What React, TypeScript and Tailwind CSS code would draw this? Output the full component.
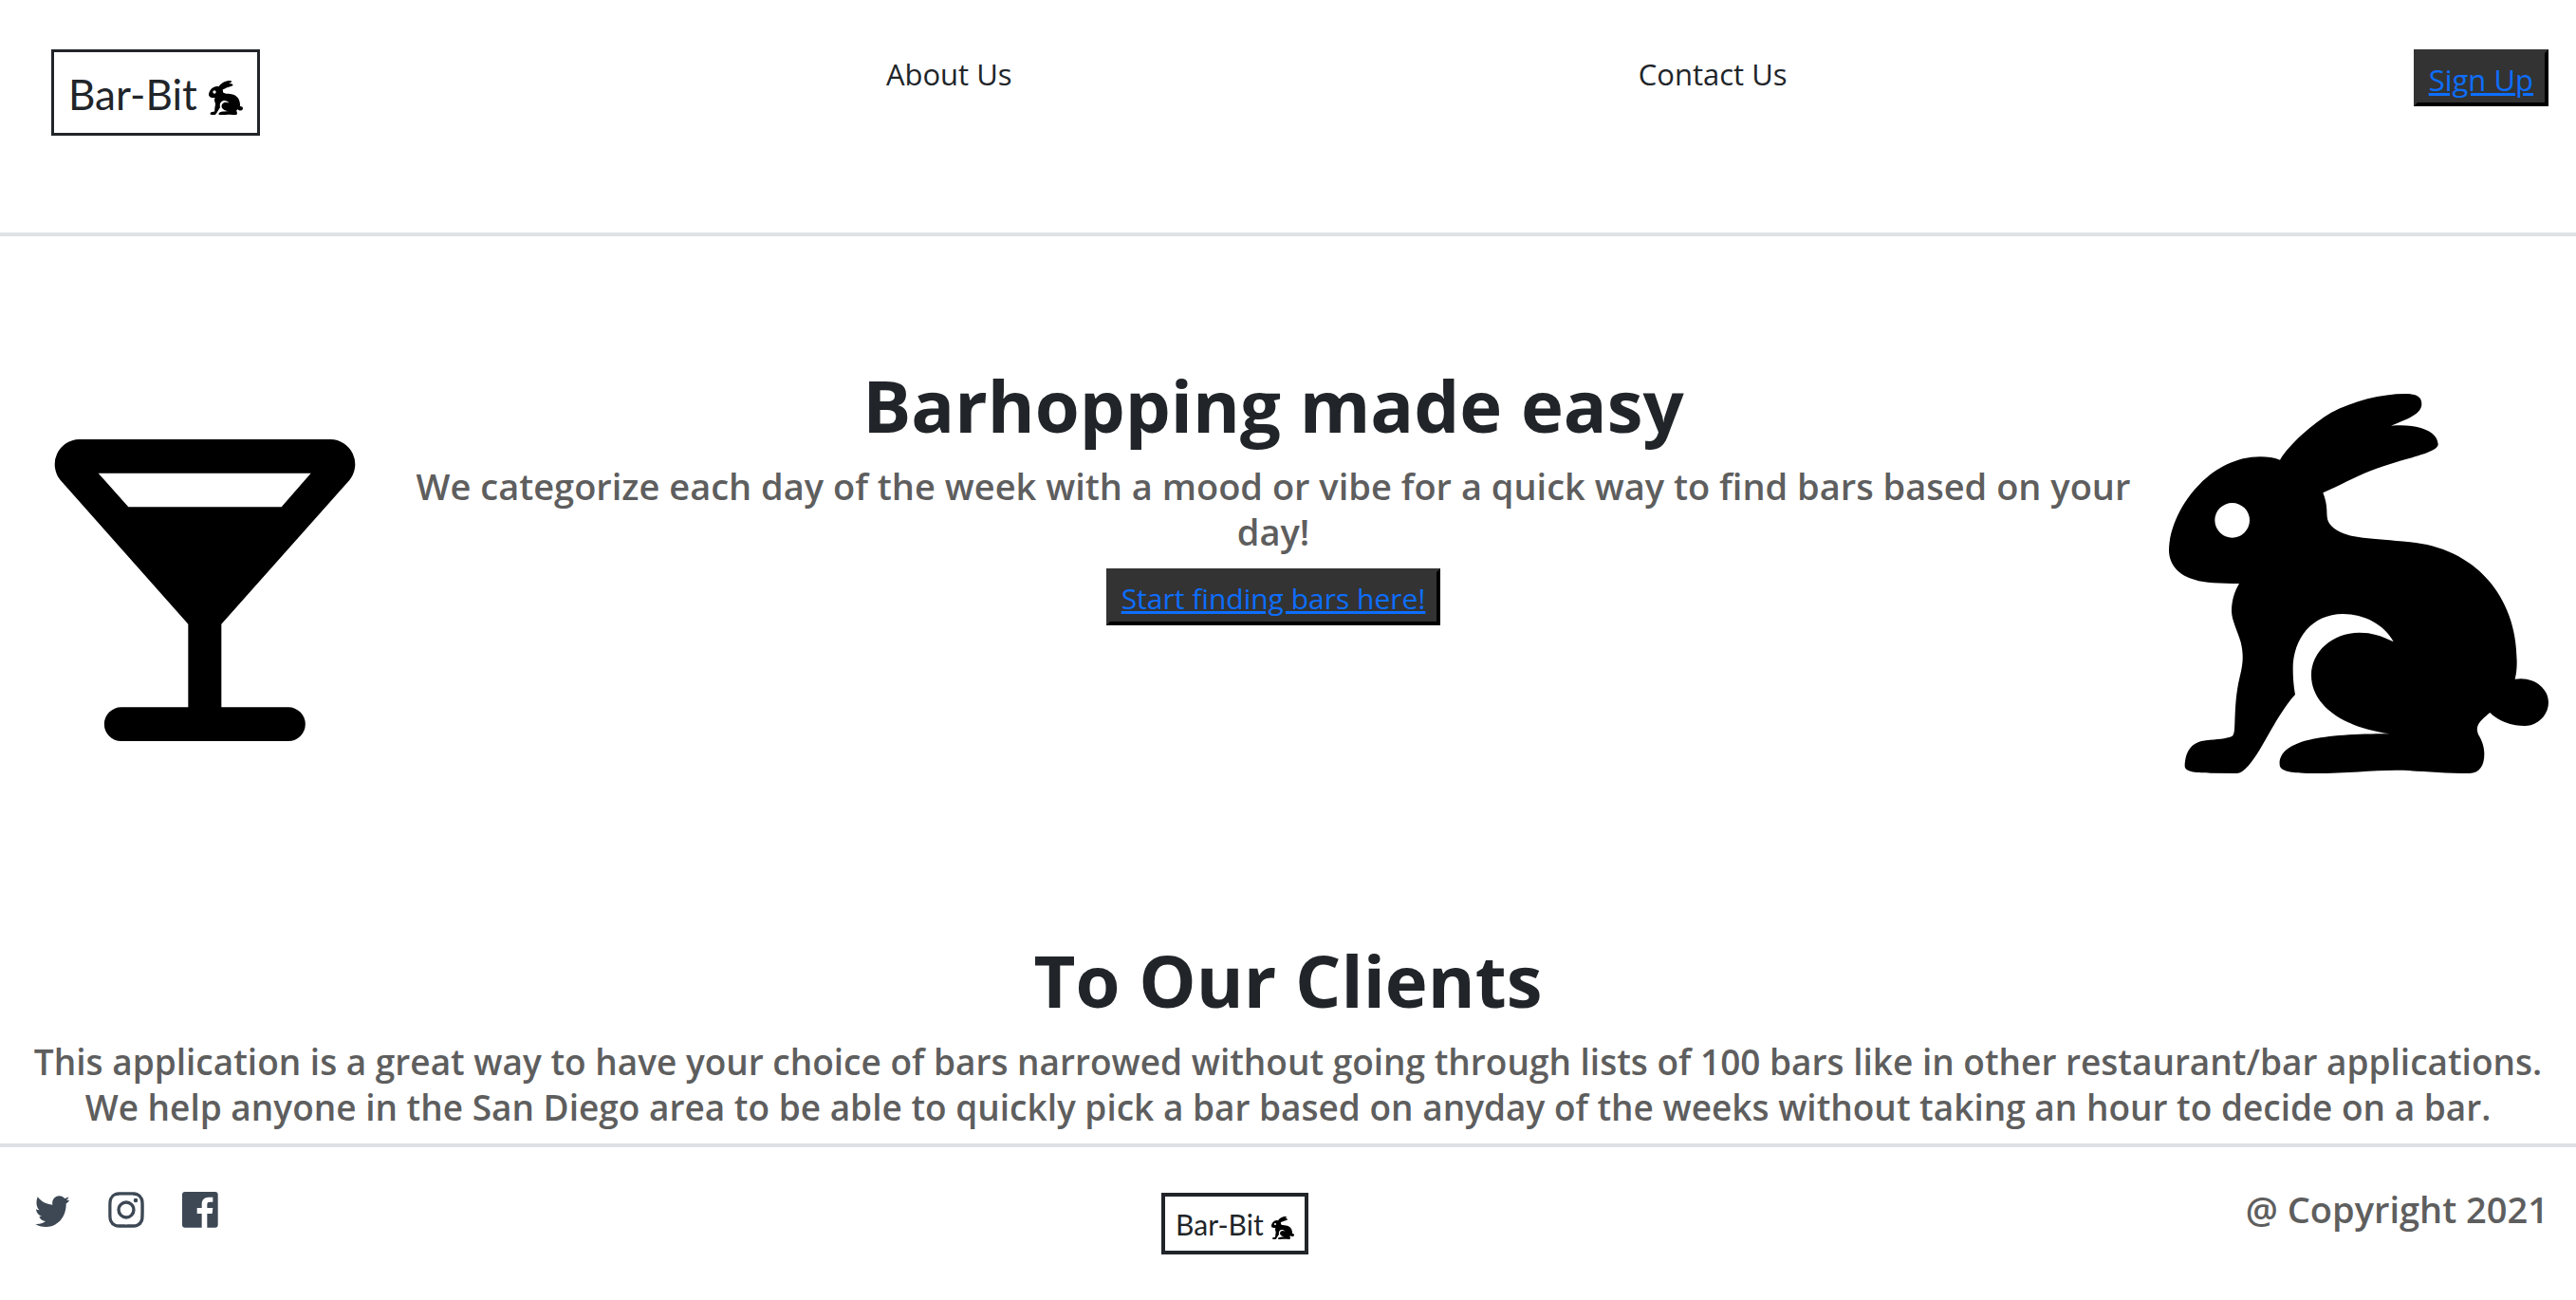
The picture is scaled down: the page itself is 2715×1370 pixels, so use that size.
import { BiLogoInstagram } from "react-icons/bi";

function Rabbit({ className }: { className: string }) {
  return (
    <svg viewBox="78 75 1200 1200" className={className} fill="#000" aria-hidden="true">
      <path
        fillRule="evenodd"
        d="M429 284C460 232 535 168 590 135C660 98 750 75 825 75C862 75 877 85 877 107C877 140 830 155 780 176C870 168 928 195 929 235C929 258 850 275 780 296C690 322 650 350 565 388C590 450 562 470 600 500C645 535 720 530 840 544C1040 562 1178 710 1178 920C1178 945 1176 960 1172 977C1230 967 1278 1005 1278 1050C1278 1092 1243 1125 1203 1125C1160 1125 1120 1110 1093 1083C1060 1110 1045 1125 1056 1152C1070 1175 1075 1195 1075 1215C1075 1250 1060 1275 1028 1275C940 1275 850 1265 795 1265C720 1265 640 1275 540 1275C470 1275 429 1270 428 1248C425 1170 560 1150 775 1150C620 1128 528 1055 528 965C528 890 595 830 680 830C720 830 750 840 788 859C760 805 695 771 628 771C530 771 470 850 470 945C470 970 472 1000 477 1026C440 1065 400 1140 365 1200C340 1240 315 1275 292 1275L210 1274C170 1273 128 1273 128 1252C130 1210 145 1176 195 1171C230 1168 260 1165 275 1159C285 1155 285 1140 286 1115C288 1060 290 1020 302 970C312 930 315 900 305 860C295 825 276 790 276 762C276 730 285 700 300 675C240 674 190 674 160 663C110 650 78 615 78 570C78 450 200 274 367 274C390 274 410 277 429 284ZM333 475A55 55 0 1 0 223 475A55 55 0 1 0 333 475Z"
      />
    </svg>
  );
}

function Martini({ className }: { className: string }) {
  return (
    <svg viewBox="111 99 954 954" className={className} fill="#000" aria-hidden="true">
      <path
        fillRule="evenodd"
        d="M190 99H985A79 79 0 0 1 1045 228L640 683V946H852A53.500 53.500 0 0 1 852 1053H323A53.500 53.500 0 0 1 323 946H535V683L131 228A79 79 0 0 1 190 99ZM251 206L346 313H830L923 206Z"
      />
    </svg>
  );
}

function Twitter() {
  return (
    <svg viewBox="0 0 150 150" className="size-[50px]" fill="currentColor" aria-hidden="true">
      <path d="M29 34C40 49 57 58 76 59C73 42 85 31 97 31C105 31 110 34 114 39C119 38 123 37 127 34C126 39 124 42 120 45L129 44C127 49 124 52 119 55C120 98 92 128 57 129C42 129 30 126 22 120C34 121 46 118 54 111C44 110 37 105 34 96H43C32 93 25 84 24 73C28 75 31 76 35 76C24 67 23 49 29 34Z" />
    </svg>
  );
}

function Facebook() {
  return (
    <svg viewBox="-18 -18 150 150" className="size-[50px]" fill="currentColor" aria-hidden="true">
      <path d="M9 0H104Q113 0 113 9V104Q113 113 104 113H79V69H95L97 51H79V40C79 34 82 32 87 32H97V17H83C70 17 62 26 62 39V51H47V69H62V113H9Q0 113 0 104V9Q0 0 9 0Z" />
    </svg>
  );
}

const heading = "text-[76px] leading-[96px] font-bold text-[#212529]";
const button =
  "border-4 border-t-[#333] border-l-[#333] border-r-black border-b-black bg-[#333] px-3 pt-1 leading-[48px] text-[#0d6efd] underline";

export default function App() {
  return (
    <div className="min-h-screen bg-white font-['Open_Sans',sans-serif] text-[31px] leading-[48px] text-[#212529]">
      <header className="flex h-[249px] items-start justify-between border-b-4 border-[#dee2e6] pt-[52px] pr-[29px] pl-[54px]">
        <a href="#home" className="flex items-center gap-3 border-[3px] border-[#212529] px-[15px] pt-5 pb-[17px] font-[Lato,sans-serif] text-[44px]">
          Bar-Bit <Rabbit className="mt-2 size-9" />
        </a>
        <a href="#about" className="pt-0.5">About Us</a>
        <a href="#contact" className="pt-0.5">Contact Us</a>
        <button type="button" className={button}>Sign Up</button>
      </header>

      <main>
        <section className="flex items-start pt-[130px] pr-[29px] pl-[57px]">
          <Martini className="mt-[84px] size-[318px] shrink-0" />
          <div className="min-w-0 flex-1 pl-[23px] text-center">
            <h1 className={heading}>Barhopping made easy</h1>
            <h4 className="mt-[13px] mb-[15px] px-8 text-[38px] leading-[48px] font-semibold text-[#5e5e5e]">
              We categorize each day of the week with a mood or vibe for a quick way to find bars based on your day!
            </h4>
            <button type="button" className={`${button} text-[30px]`}>Start finding bars here!</button>
          </div>
          <Rabbit className="mt-9 size-[400px] shrink-0" />
        </section>

        <section className="px-4 pt-[170px] pb-[14px] text-center">
          <h1 className={heading}>To Our Clients</h1>
          <h4 className="mt-[14px] text-[37px] leading-[48px] font-semibold text-[#5e5e5e]">
            This application is a great way to have your choice of bars narrowed without going through lists of 100 bars like in other restaurant/bar applications. We help anyone in the San Diego area to be able to quickly pick a bar based on anyday of the weeks without taking an hour to decide on a bar.
          </h4>
        </section>
      </main>

      <footer className="flex items-start justify-between border-t-4 border-[#dee2e6] pt-[41px] pr-[29px] pl-[30px]">
        <div className="flex gap-7 text-[50px] text-[#3d4854]">
          <a href="#twitter" aria-label="Twitter"><Twitter /></a>
          <a href="#instagram" aria-label="Instagram"><BiLogoInstagram /></a>
          <a href="#facebook" aria-label="Facebook"><Facebook /></a>
        </div>
        <a href="#home" className="mt-[7px] flex items-center gap-2 border-4 border-[#212529] px-[11px] pt-[9px] pb-2 font-[Lato,sans-serif] text-[30px] leading-10">
          Bar-Bit <Rabbit className="mt-2 size-6" />
        </a>
        <h4 className="text-[38px] leading-[48px] font-semibold text-[#5e5e5e]">@ Copyright 2021</h4>
      </footer>
    </div>
  );
}
